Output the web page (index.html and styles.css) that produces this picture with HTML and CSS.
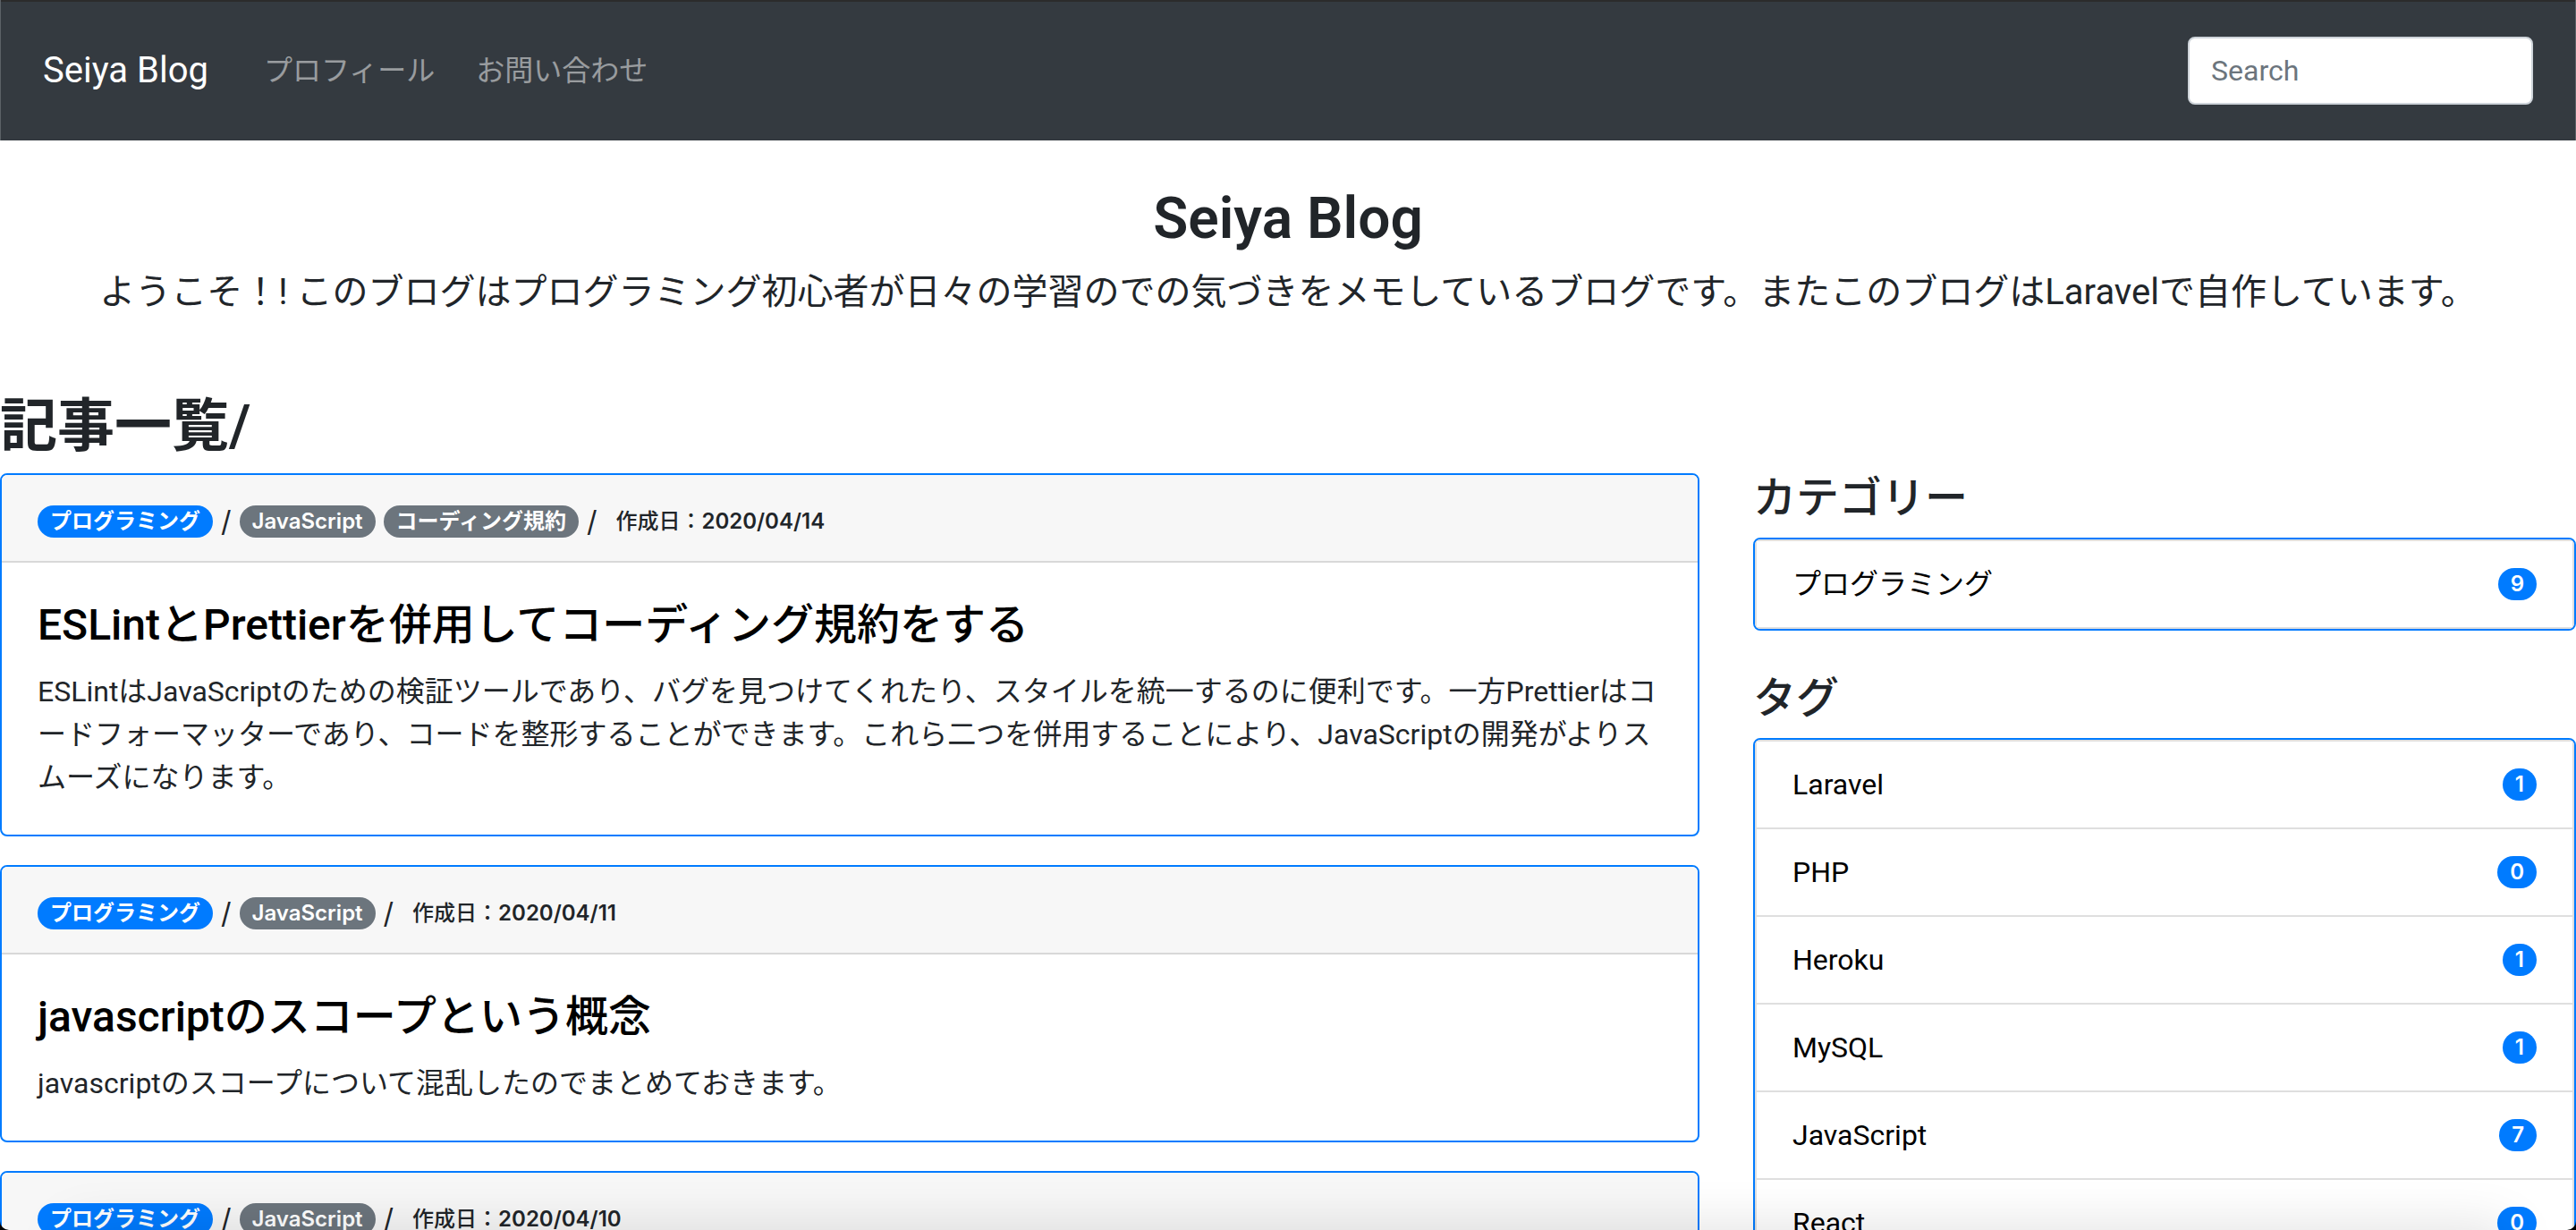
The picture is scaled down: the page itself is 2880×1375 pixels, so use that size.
FILE: index.html
```html
<!DOCTYPE html>
<html lang="ja">
<head>
<meta charset="utf-8">
<title>Seiya Blog</title>
<link rel="stylesheet" href="styles.css">
</head>
<body>
<header class="navbar">
  <a class="brand" href="#">Seiya Blog</a>
  <nav class="nav">
    <a class="nav-link" href="#">プロフィール</a>
    <a class="nav-link" href="#">お問い合わせ</a>
  </nav>
  <form class="search-form" role="search">
    <input class="search" type="search" placeholder="Search" aria-label="Search">
  </form>
</header>

<section class="hero">
  <h1 class="page-title">Seiya Blog</h1>
  <p class="lead">ようこそ！! このブログはプログラミング初心者が日々の学習のでの気づきをメモしているブログです。またこのブログはLaravelで自作しています。</p>
</section>

<h1 class="section-title">記事一覧/</h1>
<div class="columns">
  <main class="posts">
    <article class="card">
      <div class="card-header">
        <a class="badge badge-primary" href="#">プログラミング</a>
        <span>/</span>
        <a class="badge badge-secondary" href="#">JavaScript</a>
        <a class="badge badge-secondary" href="#">コーディング規約</a>
        <span>/</span>
        <span class="date">作成日：<b class="day">2020/04/14</b></span>
      </div>
      <div class="card-body">
        <h2 class="card-title"><a href="#">ESLintとPrettierを併用してコーディング規約をする</a></h2>
        <p class="card-text">ESLintはJavaScriptのための検証ツールであり、バグを見つけてくれたり、スタイルを統一するのに便利です。一方Prettierはコードフォーマッターであり、コードを整形することができます。これら二つを併用することにより、JavaScriptの開発がよりスムーズになります。</p>
      </div>
    </article>
    <article class="card">
      <div class="card-header">
        <a class="badge badge-primary" href="#">プログラミング</a>
        <span>/</span>
        <a class="badge badge-secondary" href="#">JavaScript</a>
        <span>/</span>
        <span class="date">作成日：<b class="day">2020/04/11</b></span>
      </div>
      <div class="card-body">
        <h2 class="card-title"><a href="#">javascriptのスコープという概念</a></h2>
        <p class="card-text">javascriptのスコープについて混乱したのでまとめておきます。</p>
      </div>
    </article>
    <article class="card">
      <div class="card-header">
        <a class="badge badge-primary" href="#">プログラミング</a>
        <span>/</span>
        <a class="badge badge-secondary" href="#">JavaScript</a>
        <span>/</span>
        <span class="date">作成日：<b class="day">2020/04/10</b></span>
      </div>
    </article>
  </main>
  <aside class="sidebar">
    <section>
      <h2 class="side-title">カテゴリー</h2>
      <ul class="list">
        <li class="item"><a href="#">プログラミング</a><span class="badge badge-primary">9</span></li>
      </ul>
    </section>
    <section>
      <h2 class="side-title">タグ</h2>
      <ul class="list">
        <li class="item"><a href="#">Laravel</a><span class="badge badge-primary">1</span></li>
        <li class="item"><a href="#">PHP</a><span class="badge badge-primary">0</span></li>
        <li class="item"><a href="#">Heroku</a><span class="badge badge-primary">1</span></li>
        <li class="item"><a href="#">MySQL</a><span class="badge badge-primary">1</span></li>
        <li class="item"><a href="#">JavaScript</a><span class="badge badge-primary">7</span></li>
        <li class="item"><a href="#">React</a><span class="badge badge-primary">0</span></li>
      </ul>
    </section>
  </aside>
</div>
<div class="bottom-shade"></div>
<div class="window-edge"></div>
</body>
</html>
```
FILE: styles.css
```css
* { box-sizing: border-box; }

body {
  margin: 0;
  height: 100vh;
  overflow: hidden;
  background: #fff;
  color: #212529;
  font-family: Roboto, "Noto Sans CJK JP", sans-serif;
  font-size: 32px;
  line-height: 48px;
  line-break: loose;
}

h1, h2, p, ul { margin: 0; padding: 0; }
a { color: inherit; text-decoration: none; }

/* Top bar */
.navbar {
  display: flex;
  align-items: center;
  padding: 41px 47px 40px;
  background: #343a40;
  border: solid #5c6166;
  border-width: 0 1px;
  box-shadow: inset 0 2px #2b2b2b;
}
.brand {
  margin-right: 62px;
  color: #fff;
  font-size: 40px;
}
.nav {
  display: flex;
  flex: 1;
  gap: 46px;
}
.nav-link { color: rgba(255, 255, 255, 0.5); }
.search {
  display: block;
  width: 386px;
  height: 76px;
  padding: 0 24px;
  border: 2px solid #ced4da;
  border-radius: 8px;
  background: #fff;
  color: #495057;
  font: inherit;
  appearance: none;
}
.search::placeholder {
  color: #6c757d;
  opacity: 1;
}

/* Introduction */
.hero {
  padding: 48px 0 80px;
  text-align: center;
}
.page-title, .section-title {
  margin-bottom: 16px;
  padding-top: 4px;
  font-size: 64px;
  font-weight: 600;
  line-height: 72px;
}
.lead {
  font-size: 40px;
  line-height: 60px;
}

/* Article list and sidebar */
.columns {
  display: grid;
  grid-template-columns: repeat(12, minmax(0, 1fr));
  gap: 60px;
  align-items: start;
}
.posts {
  grid-column: span 8;
  display: grid;
  gap: 32px;
}
.sidebar {
  grid-column: span 4;
  display: grid;
  gap: 48px;
}
.card {
  overflow: hidden;
  border: 2px solid #007bff;
  border-radius: 8px;
}
.card-header {
  display: flex;
  align-items: center;
  gap: 9px;
  padding: 28px 40px 20px;
  background: #f7f7f7;
  border-bottom: 2px solid #d8d8d8;
  font-family: Inter, "Noto Sans CJK JP", sans-serif;
}
.card-body { padding: 40px; }
.card-title {
  margin-bottom: 20px;
  color: #000;
  font-size: 48px;
  font-weight: 500;
  line-height: 60px;
}
.date {
  margin-left: 12px;
  font-size: 24px;
  font-weight: 500;
}
.day { font-weight: 600; }

.badge {
  padding: 6px 14px;
  border-radius: 18px;
  color: #fff;
  font-family: Inter, "Noto Sans CJK JP", sans-serif;
  font-size: 24px;
  font-weight: 600;
  line-height: 24px;
}
.badge-primary { background: #007bff; }
.badge-secondary { background: #6c757d; }

.side-title {
  margin-bottom: 16px;
  font-size: 48px;
  font-weight: 500;
  line-height: 56px;
}
.list {
  overflow: hidden;
  border: 2px solid #007bff;
  border-radius: 8px;
  list-style: none;
}
.item {
  display: flex;
  align-items: center;
  justify-content: space-between;
  padding: 24px 40px;
  border: 2px solid #dfdfdf;
  border-bottom-width: 0;
  color: #000;
}
.item:last-child { border-bottom-width: 2px; }

/* Soft shade along the lower window edge */
.bottom-shade {
  position: fixed;
  right: 100px;
  bottom: 0;
  left: 100px;
  height: 0;
  box-shadow: 0 24px 60px 24px rgba(0, 0, 0, 0.14);
  pointer-events: none;
}

/* Rounded lower corners of the window */
.window-edge {
  position: fixed;
  inset: 0;
  border-radius: 0 0 10px 10px;
  box-shadow: 0 0 0 10px #000;
  pointer-events: none;
}
```
